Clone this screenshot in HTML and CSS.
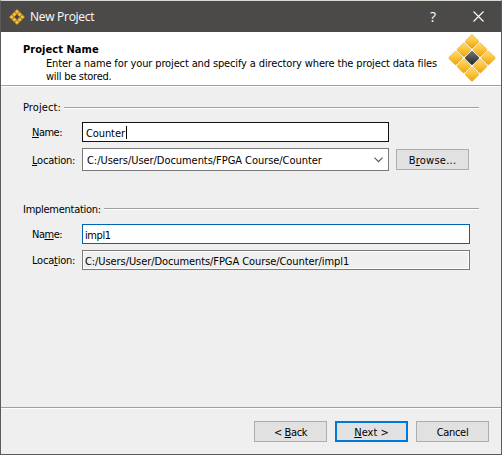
FILE: index.html
```
<!DOCTYPE html>
<html lang="en">
<head>
<meta charset="utf-8">
<title>New Project</title>
<link rel="stylesheet" href="styles.css">
</head>
<body>
<svg width="0" height="0" class="defs" aria-hidden="true">
  <defs>
    <linearGradient id="gold" x1="0" y1="0" x2="1" y2="1"><stop offset="0" stop-color="#ffdc76"/><stop offset=".5" stop-color="#fcc234"/><stop offset="1" stop-color="#e9a010"/></linearGradient>
    <linearGradient id="dark" x1="0" y1="0" x2="1" y2="1"><stop offset="0" stop-color="#777"/><stop offset="1" stop-color="#222"/></linearGradient>
  </defs>
</svg>
<main class="window">
  <header class="titlebar">
    <svg class="app-icon" width="16" height="16" viewBox="0 0 16 16">
      <g transform="translate(8 8) rotate(45)" fill="#f8bd35" stroke="#b5821c" stroke-width=".4">
        <rect x="-5.4" y="-5.4" width="3.3" height="3.3"/><rect x="-1.65" y="-5.4" width="3.3" height="3.3"/><rect x="2.1" y="-5.4" width="3.3" height="3.3"/>
        <rect x="-5.4" y="-1.65" width="3.3" height="3.3"/><rect x="2.1" y="-1.65" width="3.3" height="3.3"/>
        <rect x="-5.4" y="2.1" width="3.3" height="3.3"/><rect x="-1.65" y="2.1" width="3.3" height="3.3"/><rect x="2.1" y="2.1" width="3.3" height="3.3"/>
      </g>
    </svg>
    <span class="caption">New Project</span>
    <span class="help">?</span>
    <svg class="close" width="11" height="11" viewBox="0 0 11 11"><path d="M.5 .5l10 10M10.500 .5l-10 10" stroke="#fff" stroke-width="1.1"/></svg>
  </header>
  <section class="banner">
    <div class="banner-text">
      <h1>Project Name</h1>
      <p><span class="line1">Enter a name for your project and specify a directory where the project data files</span><br><span class="line2">will be stored.</span></p>
    </div>
    <svg class="logo" width="48" height="48" viewBox="0 0 48 48">
      <g transform="translate(24 24) rotate(45)" fill="url(#gold)" stroke="#dc9d20" stroke-width=".5">
        <rect x="-16.700" y="-16.700" width="10.300" height="10.300" rx="1.300"/><rect x="-5.150" y="-16.700" width="10.300" height="10.300" rx="1.300"/><rect x="6.400" y="-16.700" width="10.300" height="10.300" rx="1.300"/>
        <rect x="-16.700" y="-5.150" width="10.300" height="10.300" rx="1.300"/><rect x="-5.150" y="-5.150" width="10.300" height="10.300" rx="1.300" fill="url(#dark)" stroke="#333"/><rect x="6.400" y="-5.150" width="10.300" height="10.300" rx="1.300"/>
        <rect x="-16.700" y="6.400" width="10.300" height="10.300" rx="1.300"/><rect x="-5.150" y="6.400" width="10.300" height="10.300" rx="1.300"/><rect x="6.400" y="6.400" width="10.300" height="10.300" rx="1.300"/>
      </g>
    </svg>
  </section>
  <section class="content">
    <div class="group-title"><span class="t-project">Project:</span><i></i></div>
    <div class="fields">
      <span class="label l-name"><u>N</u>ame:</span>
      <div class="field active"><span class="v-counter">Counter</span><b class="caret"></b></div>
      <span></span>
      <span class="label l-loc low"><u>L</u>ocation:</span>
      <div class="field combo"><span class="v-path">C:/Users/User/Documents/FPGA Course/Counter</span>
        <svg width="9" height="6" viewBox="0 0 9 6"><path d="M.5 .7l4 4 4-4" fill="none" stroke="#555" stroke-width="1.1"/></svg>
      </div>
      <div class="button"><span class="b-browse">B<u>r</u>owse...</span></div>
    </div>
    <div class="group-title second"><span class="t-impl">Implementation:</span><i></i></div>
    <div class="fields wide">
      <span class="label l-name">Na<u>m</u>e:</span>
      <div class="field focus"><span class="v-impl">impl1</span></div>
      <span class="label l-loc">Loca<u>t</u>ion:</span>
      <div class="field readonly"><span class="v-full">C:/Users/User/Documents/FPGA Course/Counter/impl1</span></div>
    </div>
  </section>
  <footer class="footer">
    <div class="button"><span class="b-back">&lt; <u>B</u>ack</span></div>
    <div class="button default"><span class="b-next"><u>N</u>ext &gt;</span></div>
    <div class="button"><span class="b-cancel">Cancel</span></div>
  </footer>
</main>
</body>
</html>
```
FILE: styles.css
```
* { box-sizing: border-box; }
body { margin: 0; overflow: hidden; }
.defs { position: absolute; }
.window {
  width: 502px; height: 455px;
  display: flex; flex-direction: column;
  background: #efefef;
  border: 1px solid #5b5b5e;
  border-top-color: #d3d8d0;
  font: 11px/13px "DejaVu Sans Condensed", "DejaVu Sans", sans-serif;
  font-stretch: condensed;
  color: #000;
  white-space: nowrap;
}
u { text-decoration: underline; text-underline-offset: 1px; text-decoration-thickness: 1px; text-decoration-skip-ink: none; }
.titlebar {
  height: 31px; flex: none;
  display: flex; align-items: center;
  padding: 0 17px 0 8px;
  background: #4c4a48; color: #fff;
  font: 12px/16px "Open Sans", "Noto Sans", sans-serif;
}
.caption { margin-left: 5px; letter-spacing: -.28px; }
.help { margin-left: auto; margin-right: 37px; font-size: 14px; }
.banner {
  height: 55px; flex: none;
  display: flex; justify-content: space-between;
  padding: 2px 5px 0 22px;
  background: #fff;
  border-bottom: 1px solid #fff;
  box-shadow: inset 0 -1px #a0a0a0;
}
.banner h1 { margin: 9px 0 0; font-size: 11px; line-height: 14px; letter-spacing: .05px; }
.banner p { margin: 0 0 0 23px; }
.line1 { letter-spacing: -.135px; }
.line2 { letter-spacing: -.27px; }
.content { padding: 14px 22px 0; flex: 1; }
.group-title { height: 13px; display: flex; align-items: center; gap: 3px; }
.group-title i { flex: 1; height: 2px; background: linear-gradient(#a0a0a0 50%, #fff 50%); }
.second { margin-top: 31px; }
.t-project { letter-spacing: .1px; }
.t-impl { letter-spacing: -.27px; padding-top: 2px; }
.fields {
  display: grid; grid-template-columns: 50px 307px 80px; grid-template-rows: 20px 23px;
  row-gap: 6px; align-items: center;
  padding-left: 9px; margin: 8px -20px 0 0;
}
.fields .button { margin-left: 7px; }
.wide { grid-template-columns: 50px 388px; grid-template-rows: 20px 20px; margin-top: 9px; }
.l-name { letter-spacing: -.5px; }
.l-loc { letter-spacing: -.22px; }
.low { padding-top: 2px; }
.field {
  height: 100%; display: flex; align-items: center;
  padding: 2px 2px 0; border: 1px solid #7a7a7a; background: #fff;
}
.active { border-color: #111; }
.focus { border-color: #0065b3; }
.readonly { background: #efefef; box-shadow: inset 0 0 0 1px #fff; }
.combo { justify-content: space-between; padding: 0 5px 0 4px; }
.combo span { padding-top: 2px; }
.v-counter { letter-spacing: -.1px; padding-left: 1px; }
.v-path { letter-spacing: -.05px; }
.v-full { letter-spacing: -.08px; }
.v-impl { letter-spacing: -.4px; }
.caret { width: 1px; height: 13px; background: #000; margin: -2px 0 0 1px; }
.button {
  width: 73px; height: 21px;
  display: flex; align-items: center; justify-content: center;
  background: #e1e1e1; border: 1px solid #adadad;
}
.button span { padding-top: 2px; }
.b-browse { letter-spacing: .25px; }
.b-back { letter-spacing: -.4px; }
.b-cancel { letter-spacing: -.3px; }
.default { border: 2px solid #0078d7; }
.footer {
  height: 47px; flex: none;
  display: flex; justify-content: flex-end; gap: 8px;
  padding: 13px 12px 0 0;
  border-top: 1px solid #a0a0a0;
  box-shadow: inset 0 1px #fff;
}
```
